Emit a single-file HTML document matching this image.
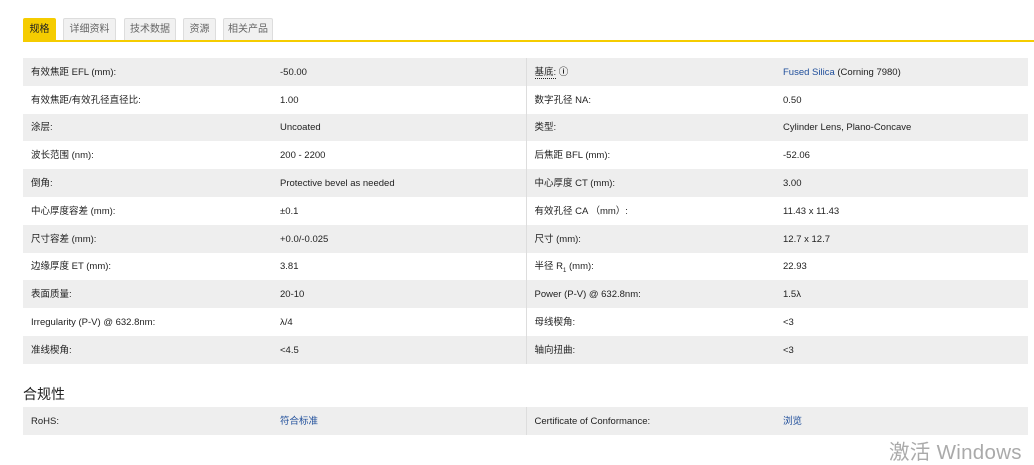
<!DOCTYPE html>
<html><head><meta charset="utf-8"><style>
body{margin:0;width:1034px;height:462px;background:#fff;font-family:"Liberation Sans","Noto Sans CJK SC",sans-serif;font-size:9.5px;color:#222;position:relative;overflow:hidden}
.tab{position:absolute;top:18px;height:22px;line-height:22px;font-size:10px;color:#666;background:#f1f1f1;border:1px solid #ddd;border-bottom:none;box-sizing:border-box;text-align:center;border-radius:2px 2px 0 0}
.tab.on{background:#f5cc00;color:#222;border-color:#f5cc00}
.line{position:absolute;left:23px;right:0;top:40px;height:2px;background:#f5cc00}
table{position:absolute;left:23px;width:1005px;border-collapse:collapse}
td{height:25.8px;padding:2px 0 0 8px;vertical-align:middle;white-space:nowrap;line-height:12px}
tr.g td{background:#eee}
td.c3{border-left:1px solid #ddd}
a{color:#1f4e9b;text-decoration:none}
h3{position:absolute;left:23px;top:384px;margin:0;font-size:14px;font-weight:normal;color:#222}
.wm{position:absolute;left:889px;top:441px;font-size:20.5px;color:#aaa;line-height:24px;letter-spacing:0.3px}
</style></head><body>
<div class="tab on" style="left:23px;width:33px">规格</div>
<div class="tab" style="left:63px;width:53px">详细资料</div>
<div class="tab" style="left:124px;width:52px">技术数据</div>
<div class="tab" style="left:183px;width:33px">资源</div>
<div class="tab" style="left:223px;width:50px">相关产品</div>
<div class="line"></div>
<table style="top:58px">
<colgroup><col style="width:249px"><col style="width:254px"><col style="width:249px"><col></colgroup>
<tr class="g"><td>有效焦距 EFL (mm):</td><td>-50.00</td><td class="c3"><span style="border-bottom:1px dotted #222">基底:</span> <b>ⓘ</b></td><td><a>Fused Silica</a> (Corning 7980)</td></tr>
<tr><td>有效焦距/有效孔径直径比:</td><td>1.00</td><td class="c3">数字孔径 NA:</td><td>0.50</td></tr>
<tr class="g"><td>涂层:</td><td>Uncoated</td><td class="c3">类型:</td><td>Cylinder Lens, Plano-Concave</td></tr>
<tr><td>波长范围 (nm):</td><td>200 - 2200</td><td class="c3">后焦距 BFL (mm):</td><td>-52.06</td></tr>
<tr class="g"><td>倒角:</td><td>Protective bevel as needed</td><td class="c3">中心厚度 CT (mm):</td><td>3.00</td></tr>
<tr><td>中心厚度容差 (mm):</td><td>±0.1</td><td class="c3">有效孔径 CA （mm）:</td><td>11.43 x 11.43</td></tr>
<tr class="g"><td>尺寸容差 (mm):</td><td>+0.0/-0.025</td><td class="c3">尺寸 (mm):</td><td>12.7 x 12.7</td></tr>
<tr><td>边缘厚度 ET (mm):</td><td>3.81</td><td class="c3">半径 R<sub style="font-size:6px;line-height:0">1</sub> (mm):</td><td>22.93</td></tr>
<tr class="g"><td>表面质量:</td><td>20-10</td><td class="c3">Power (P-V) @ 632.8nm:</td><td>1.5λ</td></tr>
<tr><td>Irregularity (P-V) @ 632.8nm:</td><td>λ/4</td><td class="c3">母线楔角:</td><td>&lt;3</td></tr>
<tr class="g"><td>准线楔角:</td><td>&lt;4.5</td><td class="c3">轴向扭曲:</td><td>&lt;3</td></tr>
</table>
<h3>合规性</h3>
<table style="top:407px">
<colgroup><col style="width:249px"><col style="width:254px"><col style="width:249px"><col></colgroup>
<tr class="g"><td style="height:24px">RoHS:</td><td><a>符合标准</a></td><td class="c3">Certificate of Conformance:</td><td><a>浏览</a></td></tr>
</table>
<div class="wm">激活 Windows</div>
</body></html>
